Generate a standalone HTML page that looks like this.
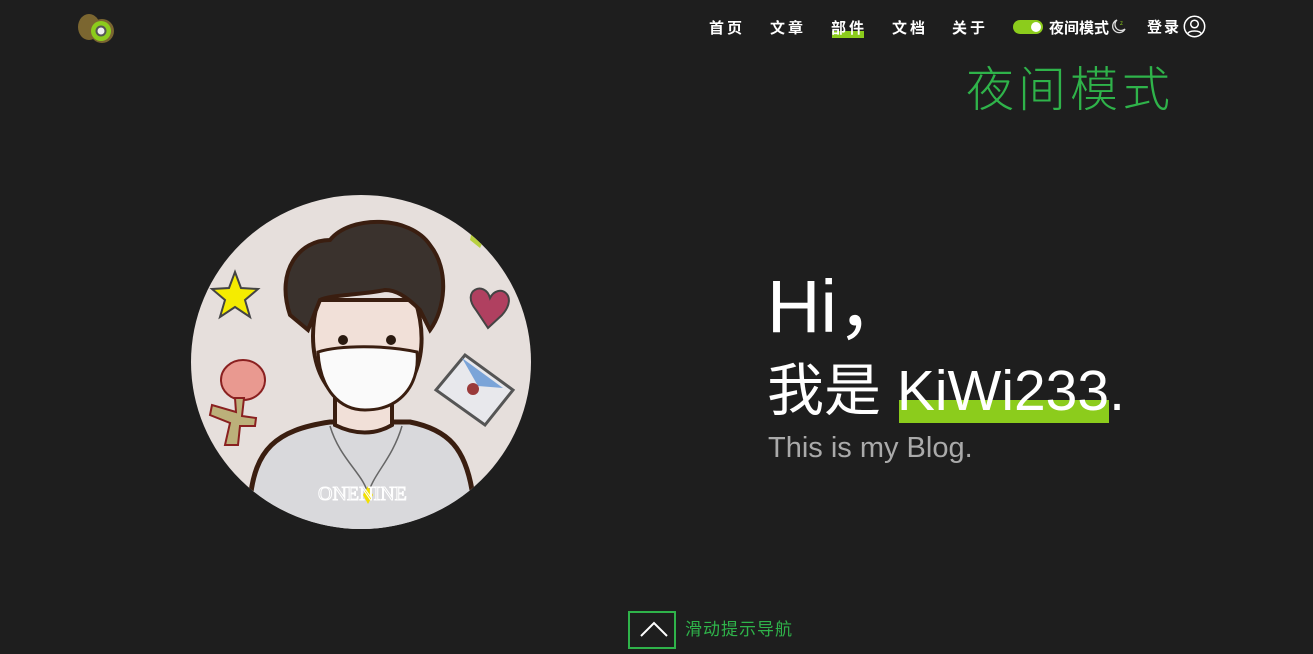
<!DOCTYPE html>
<html><head><meta charset="utf-8"><style>
*{margin:0;padding:0;box-sizing:border-box}
body{width:1313px;height:654px;background:#1e1e1e;overflow:hidden;position:relative;font-family:"Liberation Sans","Noto Sans CJK SC",sans-serif;color:#fff}
.nav a{position:absolute;top:17px;font-size:15px;font-weight:bold;letter-spacing:3px;color:#fff}
.abs{position:absolute}
</style></head><body>
<svg class="abs" style="left:76px;top:10px" width="44" height="36" viewBox="0 0 44 36">
<ellipse cx="13" cy="17" rx="11" ry="13" fill="#7b6630"/>
<circle cx="26" cy="21" r="12" fill="#7b6630"/>
<circle cx="25" cy="21" r="10" fill="#8ccc1c"/>
<circle cx="25" cy="21" r="5.5" fill="#555"/>
<circle cx="25" cy="21" r="3.5" fill="#eee"/>
</svg>
<div class="nav">
<div class="abs" style="left:832px;top:31px;width:32px;height:7px;background:#8ccc1c"></div>
<a style="left:709px">首页</a>
<a style="left:770px">文章</a>
<a style="left:831px">部件</a>
<a style="left:892px">文档</a>
<a style="left:952px">关于</a>
</div>
<div class="abs" style="left:1013px;top:20px;width:30px;height:14px;border-radius:7px;background:#8ccc1c"></div>
<div class="abs" style="left:1031px;top:22px;width:10px;height:10px;border-radius:50%;background:#fff"></div>
<div class="abs" style="left:1049px;top:17px;font-size:15px;font-weight:bold">夜间模式</div>
<svg class="abs" style="left:1109px;top:17px" width="18" height="18" viewBox="0 0 18 18"><path d="M8 3A6.5 6.5 0 1 0 16 12A5.5 5.5 0 0 1 8 3Z" fill="none" stroke="#ddd" stroke-width="1.3"/><text x="11" y="8" font-size="6" fill="#8ccc1c" font-family="Liberation Sans">z</text></svg>
<div class="abs" style="left:1147px;top:16px;font-size:15px;font-weight:bold;letter-spacing:2px">登录</div>
<svg class="abs" style="left:1183px;top:15px" width="23" height="23" viewBox="0 0 23 23"><circle cx="11.5" cy="11.5" r="10.2" fill="none" stroke="#fff" stroke-width="1.5"/><circle cx="11.5" cy="9" r="3.8" fill="none" stroke="#fff" stroke-width="1.5"/><path d="M4.5 19C6 15 17 15 18.5 19" fill="none" stroke="#fff" stroke-width="1.5"/></svg>
<div class="abs" style="left:966px;top:50px;font-size:48px;color:#2fb34a;letter-spacing:4px;font-family:'Noto Sans CJK SC',sans-serif;font-weight:300">夜间模式</div>

<svg class="abs" style="left:180px;top:190px" width="360" height="350" viewBox="0 0 360 350">
<defs><clipPath id="c"><ellipse cx="181" cy="172" rx="170" ry="167"/></clipPath></defs>
<g clip-path="url(#c)">
<rect width="360" height="350" fill="#e6dfdc"/>
<path d="M55 82L61 98L78 99L65 110L70 127L55 117L40 127L45 110L32 99L49 98Z" fill="#f5ec00" stroke="#444" stroke-width="2"/>
<path d="M296 120C280 100 305 90 310 108C318 92 340 105 322 125L308 138Z" fill="#b04060" stroke="#444" stroke-width="2"/>
<path d="M256 200L285 165L333 200L305 235Z" fill="#e8e8ec" stroke="#555" stroke-width="3"/>
<path d="M282 168L323 198L298 196Z" fill="#7ba4d8"/>
<circle cx="293" cy="199" r="6" fill="#9a3a3a"/>
<ellipse cx="63" cy="190" rx="22" ry="20" fill="#e99990" stroke="#8a2020" stroke-width="2"/>
<path d="M55 208L56 222L32 215L30 225L50 233L45 255L58 255L60 236L75 236L76 228L62 226L64 208Z" fill="#bcb07a" stroke="#8a2020" stroke-width="2"/>
<path d="M293 35L305 48L300 58L290 50Z" fill="#b8d040"/>
<path d="M70 310C75 260 95 240 150 232L230 232C270 240 285 260 292 300L300 350L60 350Z" fill="#d9d9dc" stroke="#3a1e10" stroke-width="5"/>
<path d="M155 200L155 235C175 245 195 245 212 235L212 200Z" fill="#f1e0d8" stroke="#3a1e10" stroke-width="4"/>
<path d="M138 110C130 140 130 175 150 200C175 215 205 215 225 200C245 175 245 140 235 110Z" fill="#f1e0d8" stroke="#3a1e10" stroke-width="4"/>
<path d="M110 125C95 80 120 50 150 50C170 25 230 25 250 55C270 80 265 120 250 140L240 120C225 105 215 100 205 100C180 105 150 105 140 110L128 140Z" fill="#3a322d" stroke="#3a1e10" stroke-width="4"/>
<path d="M138 162C160 155 205 155 237 162C240 195 220 220 185 220C160 220 140 200 138 162Z" fill="#fafafa" stroke="#3a1e10" stroke-width="3"/>
<circle cx="163" cy="150" r="5" fill="#2a1a10"/><circle cx="211" cy="150" r="5" fill="#2a1a10"/>
<path d="M150 236C160 270 185 285 188 305M222 236C212 270 192 285 188 305" fill="none" stroke="#666" stroke-width="1.5"/>
<path d="M188 296L193 305L188 314L183 305Z" fill="#f2e000"/>
<text x="138" y="310" font-family="Liberation Serif" font-size="20" fill="none" stroke="#fff" stroke-width="1">ONENINE</text>
</g>
</svg>

<div class="abs" style="left:767px;top:264px;font-size:74px;line-height:86px">Hi，</div>
<div class="abs" style="left:899px;top:400px;width:210px;height:23px;background:#8ccc1c"></div>
<div class="abs" style="left:767px;top:354px;font-size:57px;line-height:74px;white-space:nowrap">我是 KiWi233.</div>
<div class="abs" style="left:768px;top:432px;font-size:29px;color:#aaa">This is my Blog.</div>

<div class="abs" style="left:628px;top:611px;width:48px;height:38px;border:2px solid #2fb34a"></div>
<svg class="abs" style="left:640px;top:618px" width="28" height="22" viewBox="0 0 28 22"><path d="M1 18L14 5L27 18" fill="none" stroke="#fff" stroke-width="2"/></svg>
<div class="abs" style="left:685px;top:615px;font-size:17px;color:#2fb34a;letter-spacing:1px">滑动提示导航</div>
</body></html>
